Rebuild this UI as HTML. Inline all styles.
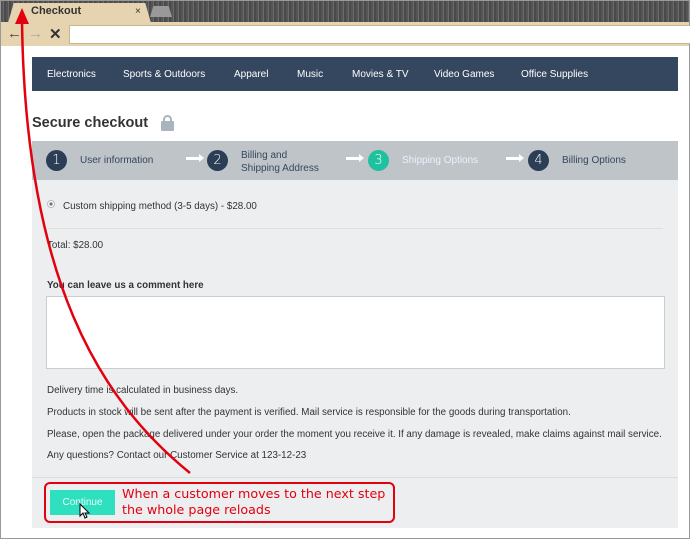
<!DOCTYPE html>
<html><head><meta charset="utf-8"><style>
*{margin:0;padding:0;box-sizing:border-box}
body{width:690px;height:539px;overflow:hidden;background:#fff;font-family:"Liberation Sans",sans-serif;position:relative;color:#333}
.a{position:absolute}
.nav span{position:absolute;top:12px;color:#fff;font-size:10px}
.st{position:absolute;font-size:10px;color:#34475e}
.c{position:absolute;width:21px;height:21px;border-radius:50%;background:#2c3e55;color:#fff;font-size:13px;text-align:center;line-height:21px;font-family:"DejaVu Sans",sans-serif;font-weight:200}
.ar{position:absolute;top:157px;width:14px;height:3px;background:#fff}
.ar:after{content:"";position:absolute;right:-4px;top:-3px;border-left:5px solid #fff;border-top:4.5px solid transparent;border-bottom:4.5px solid transparent}
.t{position:absolute;left:47px;font-size:9.8px;color:#333}
</style></head><body>
<div class="a" style="left:0;top:0;width:690px;height:539px;border:1px solid #999"></div>
<div class="a" style="left:1px;top:1px;width:688px;height:21px;background:repeating-linear-gradient(90deg,#555 0 2px,#6a6a6a 2px 3px,#4a4a4a 3px 5px)"></div>
<div class="a" style="left:8px;top:3px;width:143px;height:20px;background:#e6d4b0;clip-path:polygon(4% 0,96% 0,100% 100%,0 100%)"></div>
<div class="a" style="left:150px;top:6px;width:22px;height:11px;background:#999;clip-path:polygon(15% 0,85% 0,100% 100%,0 100%)"></div>
<div class="a" style="left:31px;top:5px;font-size:11px;font-weight:bold;color:#333">Checkout</div>
<div class="a" style="left:135px;top:6px;font-size:10px;color:#333">×</div>
<div class="a" style="left:1px;top:22px;width:688px;height:24px;background:#e6d4b0"></div>
<div class="a" style="left:69px;top:25px;width:621px;height:19px;background:#fff;border:1px solid #c9b68c;border-right:none"></div>
<div class="a" style="left:7px;top:25px;font-size:15px;color:#444;font-weight:bold">←</div>
<div class="a" style="left:28px;top:25px;font-size:15px;color:#aaa">→</div>
<div class="a" style="left:49px;top:25px;font-size:15px;color:#333;font-weight:bold">✕</div>
<div class="a nav" style="left:32px;top:57px;width:646px;height:34px;background:#34475e">
<span style="left:15px">Electronics</span><span style="left:91px">Sports &amp; Outdoors</span><span style="left:202px">Apparel</span><span style="left:265px">Music</span><span style="left:320px">Movies &amp; TV</span><span style="left:402px">Video Games</span><span style="left:489px">Office Supplies</span></div>
<div class="a" style="left:32px;top:115px;font-size:14.5px;font-weight:bold;color:#333">Secure checkout</div>
<div class="a" style="left:161px;top:121px;width:13px;height:10px;background:#aab4bf;border-radius:1px"></div>
<div class="a" style="left:163px;top:115px;width:9px;height:9px;border:2px solid #aab4bf;border-bottom:none;border-radius:5px 5px 0 0"></div>
<div class="a" style="left:32px;top:141px;width:646px;height:39px;background:#bfc4c8"></div>
<div class="c" style="left:46px;top:150px">1</div><div class="st" style="left:80px;top:155px">User information</div>
<div class="ar" style="left:186px"></div>
<div class="c" style="left:207px;top:150px">2</div><div class="st" style="left:241px;top:149px;line-height:13px">Billing and<br>Shipping Address</div>
<div class="ar" style="left:346px"></div>
<div class="c" style="left:368px;top:150px;background:#1fc19e">3</div><div class="st" style="left:402px;top:155px;color:#eef">Shipping Options</div>
<div class="ar" style="left:506px"></div>
<div class="c" style="left:528px;top:150px">4</div><div class="st" style="left:562px;top:155px">Billing Options</div>
<div class="a" style="left:32px;top:180px;width:646px;height:348px;background:#eceef0"></div>
<div class="a" style="left:47px;top:200px;width:8px;height:8px;border-radius:50%;border:1px solid #bbb;background:radial-gradient(#777 35%,#fff 45%)"></div>
<div class="t" style="left:63px;top:201px">Custom shipping method (3-5 days) - $28.00</div>
<div class="a" style="left:47px;top:228px;width:616px;height:1px;background:#e2dfd9"></div>
<div class="t" style="top:240px">Total: $28.00</div>
<div class="t" style="top:280px;font-weight:bold">You can leave us a comment here</div>
<div class="a" style="left:46px;top:296px;width:619px;height:73px;background:#fff;border:1px solid #ccc"></div>
<div class="t" style="top:385px">Delivery time is calculated in business days.</div>
<div class="t" style="top:407px">Products in stock will be sent after the payment is verified. Mail service is responsible for the goods during transportation.</div>
<div class="t" style="top:429px">Please, open the package delivered under your order the moment you receive it. If any damage is revealed, make claims against mail service.</div>
<div class="t" style="top:450px">Any questions? Contact our Customer Service at 123-12-23</div>
<div class="a" style="left:32px;top:477px;width:646px;height:1px;background:#dcdcdc"></div>
<div class="a" style="left:50px;top:490px;width:65px;height:25px;background:#2ee0c0;color:#e8fff9;font-size:10px;text-align:center;line-height:25px">Continue</div>
<div class="a" style="left:44px;top:482px;width:351px;height:41px;border:2px solid #e3000f;border-radius:6px"></div>
<div class="a" style="left:122px;top:486px;font-size:12.7px;color:#e3000f;line-height:16px;font-family:'DejaVu Sans',sans-serif">When a customer moves to the next step<br>the whole page reloads</div>
<svg class="a" style="left:0;top:0" width="690" height="539"><path d="M190,473 C100,400 25,280 22,20" fill="none" stroke="#e3000f" stroke-width="2.5"/><polygon points="22,8 15,24 29,24" fill="#e3000f"/><path d="M80,504 l0,12 l3,-3 l2,5 l2,-1 l-2,-4 l4,0 z" fill="#fff" stroke="#000" stroke-width="1"/></svg>
</body></html>
